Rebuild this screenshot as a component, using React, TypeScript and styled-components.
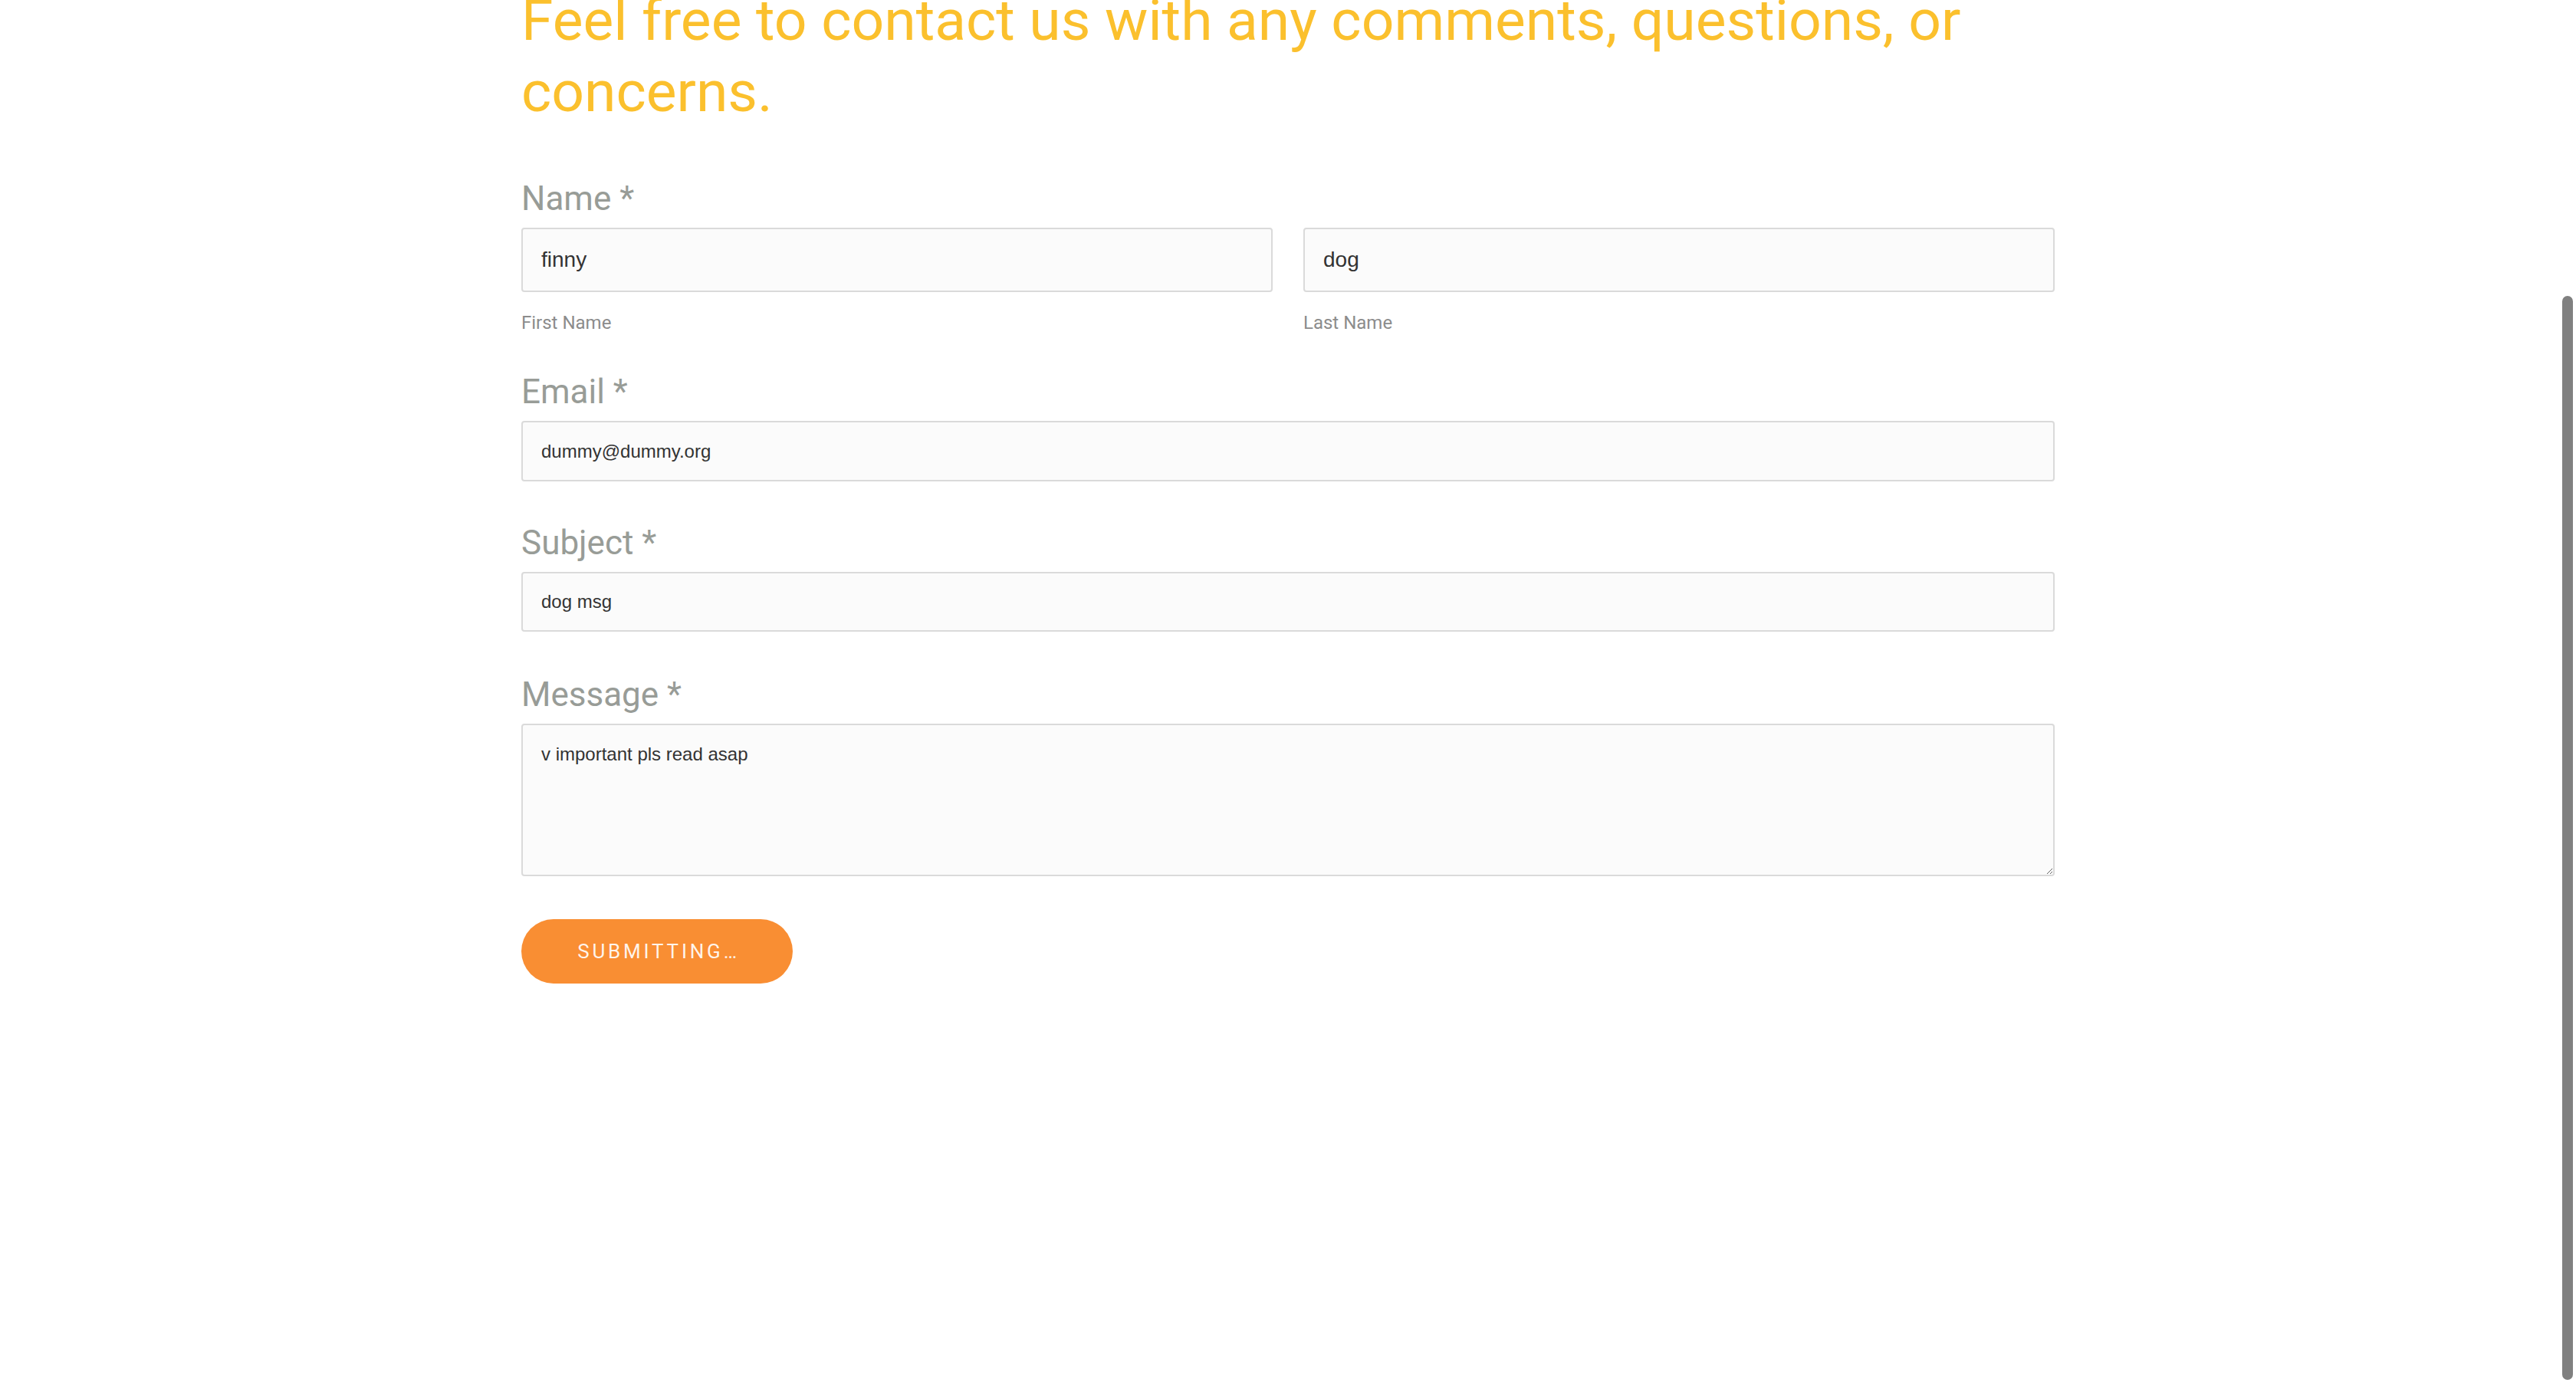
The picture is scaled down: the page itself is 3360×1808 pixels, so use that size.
import React from 'react';
import styled, { createGlobalStyle } from 'styled-components';

const GlobalStyle = createGlobalStyle`
  html, body {
    margin: 0;
    padding: 0;
    background: #ffffff;
    overflow: hidden;
    height: 100%;
  }
  body {
    font-family: Roboto, "Liberation Sans", sans-serif;
  }
  *, *::before, *::after {
    box-sizing: border-box;
  }
`;

const Page = styled.main`
  width: 2000px;
  margin: 0 auto;
`;

const Heading = styled.h1`
  margin: -20px 0 69px;
  font-family: Roboto, "Liberation Sans", sans-serif;
  font-weight: 400;
  font-size: 75px;
  line-height: 92.5px;
  color: #fbc02d;
`;

const Form = styled.form`
  display: flex;
  flex-direction: column;
  align-items: stretch;
`;

const Field = styled.div<{ $after?: number }>`
  display: flex;
  flex-direction: column;
  margin-bottom: ${(p) => p.$after ?? 57}px;
`;

const Label = styled.label`
  font-family: Roboto, "Liberation Sans", sans-serif;
  font-weight: 400;
  font-size: 44px;
  line-height: 50px;
  color: #989c97;
  margin-bottom: 13px;
`;

const NameRow = styled.div`
  display: grid;
  grid-template-columns: 1fr 1fr;
  column-gap: 40px;
`;

const NameColumn = styled.div`
  display: flex;
  flex-direction: column;
`;

const SubLabel = styled.span`
  margin-top: 23px;
  font-family: Roboto, "Liberation Sans", sans-serif;
  font-size: 24px;
  line-height: 34px;
  color: #8c8c8c;
`;

const TextInput = styled.input<{ $size: number; $height: number }>`
  display: block;
  width: 100%;
  height: ${(p) => p.$height}px;
  padding: 0 24px;
  border: 2px solid #dadada;
  border-radius: 4px;
  background: #fbfbfb;
  font-family: "Liberation Sans", Arial, sans-serif;
  font-size: ${(p) => p.$size}px;
  color: #333333;
  outline: none;
`;

const TextArea = styled.textarea`
  display: block;
  width: 100%;
  height: 199px;
  padding: 21px 24px;
  border: 2px solid #dadada;
  border-radius: 4px;
  background: #fbfbfb;
  font-family: "Liberation Sans", Arial, sans-serif;
  font-size: 24px;
  line-height: 1.4;
  color: #333333;
  outline: none;
  resize: vertical;
`;

const SubmitButton = styled.button`
  align-self: flex-start;
  width: 354px;
  height: 84px;
  border: none;
  border-radius: 42px;
  background: #f98e33;
  color: rgba(255, 255, 255, 0.92);
  font-family: Roboto, "Liberation Sans", sans-serif;
  font-weight: 400;
  font-size: 26px;
  letter-spacing: 3.8px;
  text-transform: uppercase;
  padding: 0 0 0 4px;
  cursor: pointer;
`;

const ScrollThumb = styled.div`
  position: fixed;
  top: 386px;
  right: 4px;
  width: 14px;
  height: 1414px;
  border-radius: 7px;
  background: #808080;
`;

export default function App() {
  return (
    <>
      <GlobalStyle />
      <Page>
        <Heading>Feel free to contact us with any comments, questions, or concerns.</Heading>
        <Form onSubmit={(e) => e.preventDefault()}>
          <Field $after={48}>
            <Label>Name *</Label>
            <NameRow>
              <NameColumn>
                <TextInput $size={28} $height={84} defaultValue="finny" />
                <SubLabel>First Name</SubLabel>
              </NameColumn>
              <NameColumn>
                <TextInput $size={28} $height={84} defaultValue="dog" />
                <SubLabel>Last Name</SubLabel>
              </NameColumn>
            </NameRow>
          </Field>
          <Field $after={55}>
            <Label>Email *</Label>
            <TextInput $size={24} $height={79} defaultValue="dummy@dummy.org" />
          </Field>
          <Field $after={57}>
            <Label>Subject *</Label>
            <TextInput $size={24} $height={78} defaultValue="dog msg" />
          </Field>
          <Field $after={56}>
            <Label>Message *</Label>
            <TextArea defaultValue="v important pls read asap" />
          </Field>
          <SubmitButton type="submit">Submitting…</SubmitButton>
        </Form>
      </Page>
      <ScrollThumb />
    </>
  );
}
